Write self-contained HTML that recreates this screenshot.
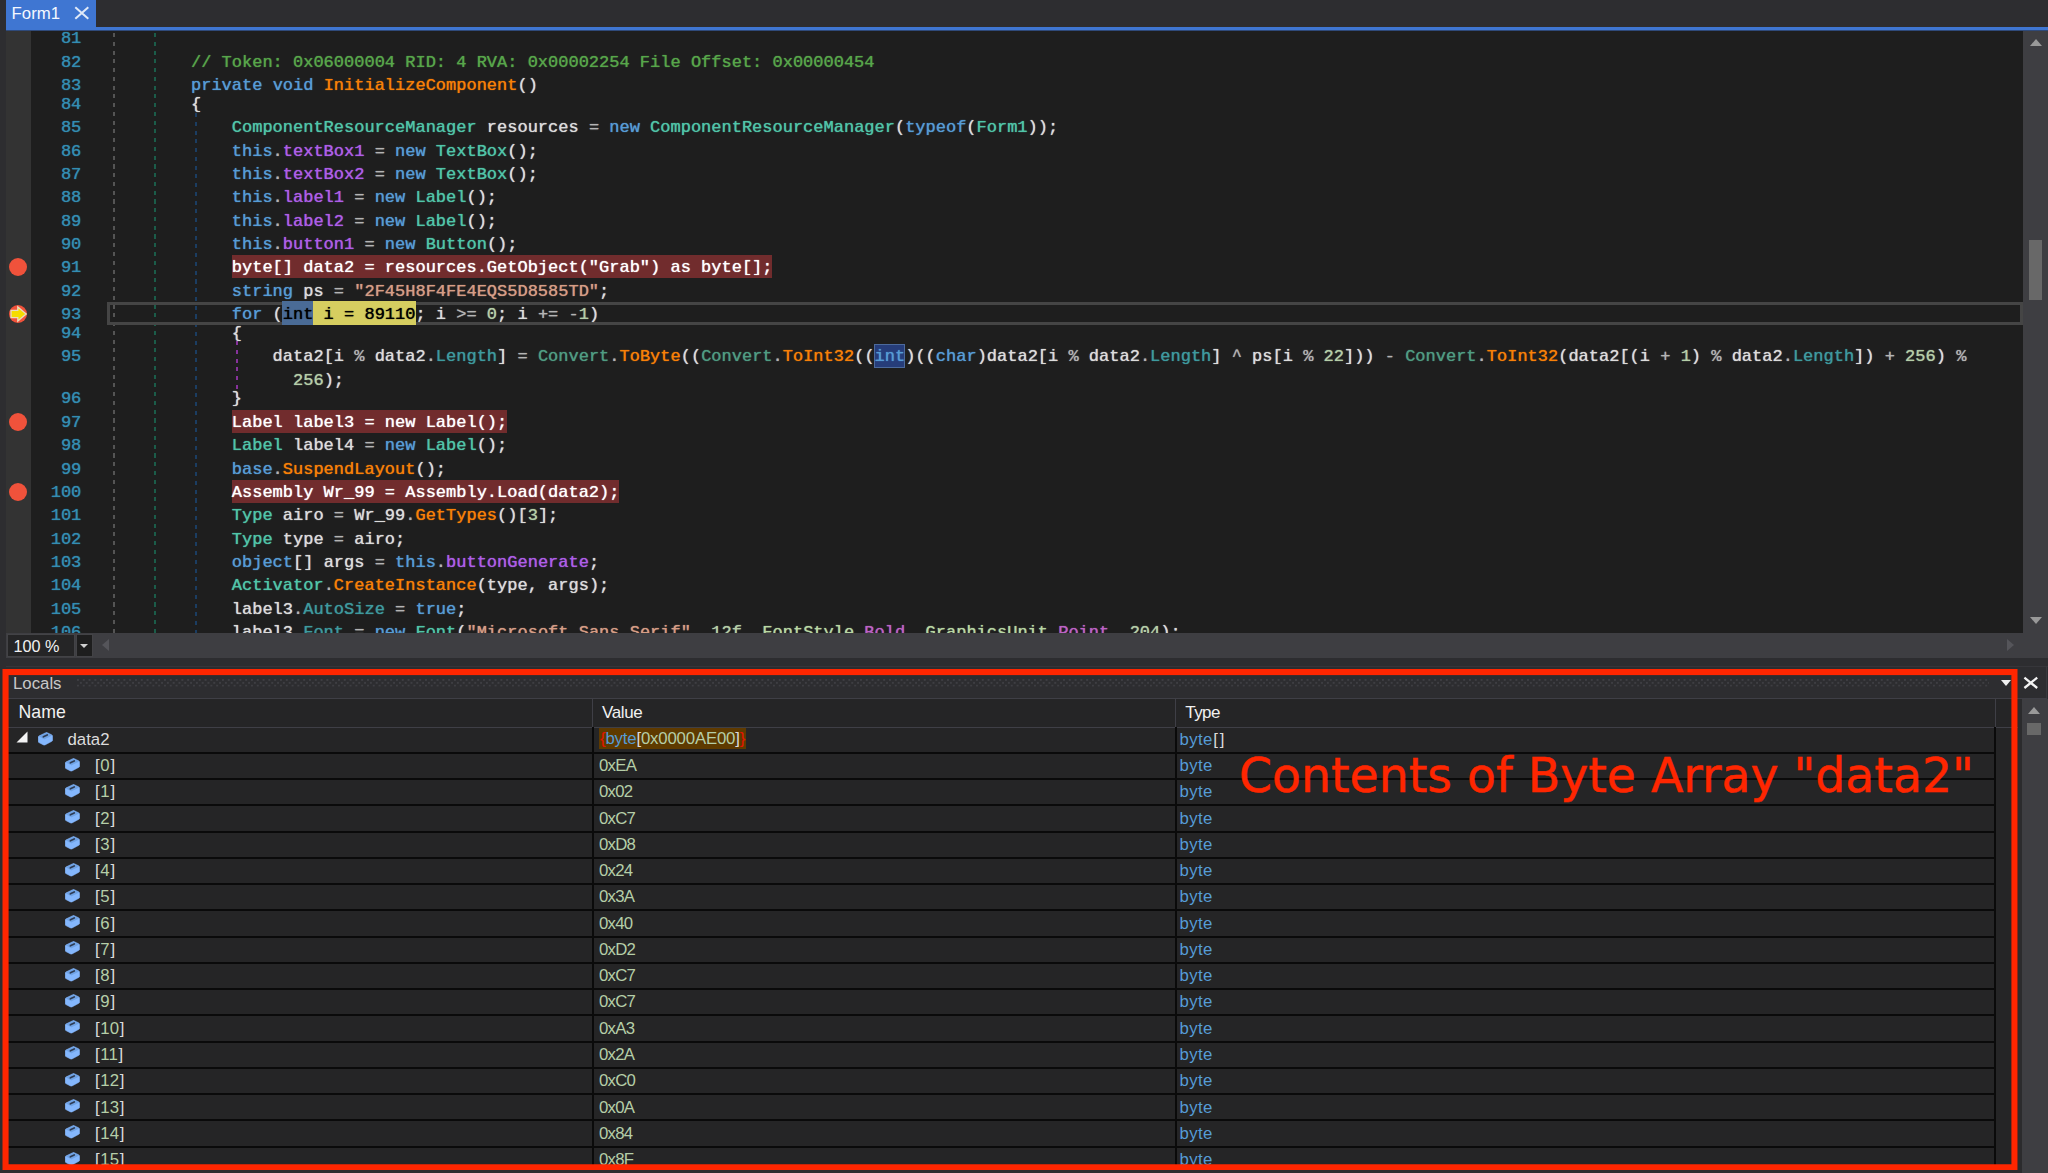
<!DOCTYPE html>
<html lang="en">
<head>
<meta charset="utf-8">
<title>dnSpy - Form1</title>
<style>
html,body{margin:0;padding:0;background:#2d2d30;}
body{width:2048px;height:1173px;overflow:hidden;background:#2d2d30;position:relative;font-family:"Liberation Sans",sans-serif;}
#tabstrip{position:absolute;left:0;top:0;width:2048px;height:27px;background:#2d2d30;}
#tab{position:absolute;left:6px;top:0;width:90px;height:28px;background:#3f76d2;color:#f4f8ff;font-size:16.5px;line-height:27px;}
#tab span{position:absolute;left:5.6px;top:-0.5px;font-size:16.8px;}
#tabline{position:absolute;left:6px;top:27px;width:2042px;height:3.4px;background:#3f76d2;}
#editor{position:absolute;left:6px;top:30px;width:2017px;height:603px;background:#1e1e1e;overflow:hidden;}
#glyph{position:absolute;left:0;top:0;width:24.5px;height:603px;background:#333333;}
.ln,.cl{text-shadow:0 0 1px currentColor;position:absolute;font-family:"Liberation Mono",monospace;font-size:17px;line-height:23px;height:23px;white-space:pre;}
.ln{left:30px;width:45.3px;text-align:right;color:#338db2;}
.cl{color:#dcdcdc;}
.c{color:#57a64a}.k{color:#569cd6}.t{color:#50c5a8}.m{color:#f88008}.f{color:#ae5ee8}.l{color:#dcdcdc}
.n{color:#b5cea8}.s{color:#d69d85}.p{color:#3e9a9e}.o{color:#b4b4b4}.x{color:#dcdcdc}.st{color:#4f9c82}
.e{color:#b8d7a3}.ef{color:#bd63c5}
.bp{color:#ffffff;}
.hl{position:absolute;box-sizing:border-box;}
.cur{color:#000;}
.guide{position:absolute;width:2px;--c:#545454;background-image:repeating-linear-gradient(to bottom,var(--c) 0,var(--c) 4.1px,transparent 4.1px,transparent 8.76px);}
#curline{position:absolute;left:100.5px;top:271.6px;width:1916.4px;height:23.4px;border:3px solid #454545;box-sizing:border-box;}
.bp-dot{position:absolute;left:2.6px;width:18px;height:18px;border-radius:50%;background:#f0523b;}
.curglyph{position:absolute;left:1.6px;}
#vscroll{position:absolute;left:2023px;top:30px;width:25px;height:603px;background:#3e3e42;}
#hscroll{position:absolute;left:6px;top:633px;width:2042px;height:25px;background:#3e3e42;}
#zoombox{position:absolute;left:0.5px;top:0.8px;width:66px;height:21.2px;background:#252526;border:1px solid #434346;color:#f1f1f1;font-size:16.2px;line-height:22px;}
#zoombox span{position:absolute;left:6px;top:0;}
#zoomdd{position:absolute;left:69.5px;top:0.8px;width:15px;height:21.2px;background:#1e1e1e;border:1px solid #434346;}
.tri{position:absolute;width:0;height:0;}
#panelhead{position:absolute;left:0;top:668px;width:2047px;height:30.5px;background:#2d2d30;}
#panelbody{position:absolute;left:6px;top:699px;width:2016px;height:474px;background:#252526;}
#colhead{position:absolute;left:6px;top:699px;width:2016px;height:27.5px;background:#252526;border-bottom:1.4px solid #3f3f46;}
.hd{position:absolute;top:699px;height:27px;line-height:27px;font-size:17px;color:#f1f1f1;}
.hsep{position:absolute;top:699px;width:1px;height:28px;background:#3f3f46;}
.vsep{position:absolute;top:727px;width:2px;height:446px;background:#0a0a0a;}
.sep{position:absolute;left:6px;width:1990px;height:2px;background:#0a0a0a;}
.row{position:absolute;left:6px;width:1990px;}
.nm,.vl,.tp{position:absolute;font-size:16.8px;line-height:25px;height:25px;white-space:pre;color:#dcdcdc;}
.vl{letter-spacing:-0.75px;}
.tp{letter-spacing:0.35px;}
.ix{letter-spacing:0.7px;}
.vhl{background:#5e3a00;display:inline-block;height:21px;line-height:21px;margin-top:1.2px;padding:0 1px 0 1px;vertical-align:top;}
.er{color:#e51400;}
.cube,.exp{position:absolute;}
#redbox{position:absolute;left:2.5px;top:669px;width:2002.8px;height:489.2px;border:6px solid #ff2600;}
#annot{-webkit-text-stroke:0.5px #ff2600;position:absolute;left:1239px;top:746.8px;font-family:"DejaVu Sans","Liberation Sans",sans-serif;font-size:47.35px;line-height:58px;color:#ff2600;white-space:pre;}
#pscroll{position:absolute;left:2022px;top:699px;width:26px;height:474px;background:#3e3e42;}
</style>
</head>
<body>
<div id="tabstrip"></div>
<div id="tab"><span>Form1</span>
<svg style="position:absolute;left:67.5px;top:6px" width="16" height="14" viewBox="0 0 16 14"><path d="M1.3 1.2 L14.3 12.8 M14.3 1.2 L1.3 12.8" stroke="#dfe9f8" stroke-width="2" fill="none"/></svg>
</div>
<div id="tabline"></div>

<div id="editor">
<div id="glyph"></div>
<div class="guide" style="left:107.3px;top:2.5px;height:601px;"></div>
<div class="guide" style="left:148.2px;top:2.5px;height:601px;--c:#1b5c49;"></div>
<div class="guide" style="left:189px;top:82.5px;height:521px;--c:#1b3d62;"></div>
<div class="guide" style="left:229.7px;top:311px;height:58px;--c:#86329b;"></div>
<div id="curline"></div>
<div class="bp-dot" style="top:228.40px"></div>
<div class="bp-dot" style="top:382.90px"></div>
<div class="bp-dot" style="top:452.90px"></div>
<svg class="curglyph" style="top:274.20px" width="20" height="20" viewBox="0 0 20 20"><circle cx="10" cy="10" r="9" fill="#f0523b"/><path d="M3 6.3 H9.8 V3 L18.2 10 L9.8 17 V13.7 H3 Z" fill="#f5dc00" stroke="#e8dcc0" stroke-width="1.3" stroke-linejoin="miter"/></svg>
<div class="ln" style="top:-2.75px">81</div>
<div class="ln" style="top:20.60px">82</div>
<div class="cl" style="top:20.60px;left:185.00px"><span class="c">// Token: 0x06000004 RID: 4 RVA: 0x00002254 File Offset: 0x00000454</span></div>
<div class="ln" style="top:43.95px">83</div>
<div class="cl" style="top:43.95px;left:185.00px"><span class="k">private</span><span class="x"> </span><span class="k">void</span><span class="x"> </span><span class="m">InitializeComponent</span><span class="x">()</span></div>
<div class="ln" style="top:62.75px">84</div>
<div class="cl" style="top:62.75px;left:185.00px"><span class="x">{</span></div>
<div class="ln" style="top:86.25px">85</div>
<div class="cl" style="top:86.25px;left:225.81px"><span class="t">ComponentResourceManager</span><span class="x"> </span><span class="l">resources</span><span class="x"> </span><span class="o">=</span><span class="x"> </span><span class="k">new</span><span class="x"> </span><span class="t">ComponentResourceManager</span><span class="x">(</span><span class="k">typeof</span><span class="x">(</span><span class="t">Form1</span><span class="x">));</span></div>
<div class="ln" style="top:109.60px">86</div>
<div class="cl" style="top:109.60px;left:225.81px"><span class="k">this</span><span class="o">.</span><span class="f">textBox1</span><span class="x"> </span><span class="o">=</span><span class="x"> </span><span class="k">new</span><span class="x"> </span><span class="t">TextBox</span><span class="x">();</span></div>
<div class="ln" style="top:132.95px">87</div>
<div class="cl" style="top:132.95px;left:225.81px"><span class="k">this</span><span class="o">.</span><span class="f">textBox2</span><span class="x"> </span><span class="o">=</span><span class="x"> </span><span class="k">new</span><span class="x"> </span><span class="t">TextBox</span><span class="x">();</span></div>
<div class="ln" style="top:156.25px">88</div>
<div class="cl" style="top:156.25px;left:225.81px"><span class="k">this</span><span class="o">.</span><span class="f">label1</span><span class="x"> </span><span class="o">=</span><span class="x"> </span><span class="k">new</span><span class="x"> </span><span class="t">Label</span><span class="x">();</span></div>
<div class="ln" style="top:179.65px">89</div>
<div class="cl" style="top:179.65px;left:225.81px"><span class="k">this</span><span class="o">.</span><span class="f">label2</span><span class="x"> </span><span class="o">=</span><span class="x"> </span><span class="k">new</span><span class="x"> </span><span class="t">Label</span><span class="x">();</span></div>
<div class="ln" style="top:202.95px">90</div>
<div class="cl" style="top:202.95px;left:225.81px"><span class="k">this</span><span class="o">.</span><span class="f">button1</span><span class="x"> </span><span class="o">=</span><span class="x"> </span><span class="k">new</span><span class="x"> </span><span class="t">Button</span><span class="x">();</span></div>
<div class="ln" style="top:226.35px">91</div>
<div class="hl" style="background:#712c2d;left:225.81px;top:225.10px;width:540.69px;height:23.2px"></div>
<div class="cl" style="top:226.35px;left:225.81px"><span class="bp">byte[] data2 = resources.GetObject("Grab") as byte[];</span></div>
<div class="ln" style="top:249.65px">92</div>
<div class="cl" style="top:249.65px;left:225.81px"><span class="k">string</span><span class="x"> </span><span class="l">ps</span><span class="x"> </span><span class="o">=</span><span class="x"> </span><span class="s">"2F45H8F4FE4EQS5D8585TD"</span><span class="x">;</span></div>
<div class="ln" style="top:273.05px">93</div>
<div class="hl" style="background:#d6ce60;left:276.02px;top:271.05px;width:134.02px;height:24.1px"></div>
<div class="hl" style="background:#4a6b96;left:276.02px;top:271.05px;width:31.41px;height:24.1px"></div>
<div class="cl" style="top:273.05px;left:225.81px"><span class="k">for</span><span class="x"> (</span><span class="cur">int i = 89110</span><span class="x">; </span><span class="l">i</span><span class="x"> </span><span class="o">&gt;=</span><span class="x"> </span><span class="n">0</span><span class="x">; </span><span class="l">i</span><span class="x"> </span><span class="o">+=</span><span class="x"> </span><span class="o">-</span><span class="n">1</span><span class="x">)</span></div>
<div class="ln" style="top:291.75px">94</div>
<div class="cl" style="top:291.75px;left:225.81px"><span class="x">{</span></div>
<div class="ln" style="top:315.45px">95</div>
<div class="hl" style="background:#263d7a;border:1px solid #4c6a9c;left:867.91px;top:313.70px;width:31.41px;height:24px"></div>
<div class="cl" style="top:315.45px;left:266.61px"><span class="l">data2</span><span class="x">[</span><span class="l">i</span><span class="x"> </span><span class="o">%</span><span class="x"> </span><span class="l">data2</span><span class="o">.</span><span class="p">Length</span><span class="x">] </span><span class="o">=</span><span class="x"> </span><span class="st">Convert</span><span class="o">.</span><span class="m">ToByte</span><span class="x">((</span><span class="st">Convert</span><span class="o">.</span><span class="m">ToInt32</span><span class="x">((</span><span class="k">int</span><span class="x">)((</span><span class="k">char</span><span class="x">)</span><span class="l">data2</span><span class="x">[</span><span class="l">i</span><span class="x"> </span><span class="o">%</span><span class="x"> </span><span class="l">data2</span><span class="o">.</span><span class="p">Length</span><span class="x">] </span><span class="o">^</span><span class="x"> </span><span class="l">ps</span><span class="x">[</span><span class="l">i</span><span class="x"> </span><span class="o">%</span><span class="x"> </span><span class="n">22</span><span class="x">])) </span><span class="o">-</span><span class="x"> </span><span class="st">Convert</span><span class="o">.</span><span class="m">ToInt32</span><span class="x">(</span><span class="l">data2</span><span class="x">[(</span><span class="l">i</span><span class="x"> </span><span class="o">+</span><span class="x"> </span><span class="n">1</span><span class="x">) </span><span class="o">%</span><span class="x"> </span><span class="l">data2</span><span class="o">.</span><span class="p">Length</span><span class="x">]) </span><span class="o">+</span><span class="x"> </span><span class="n">256</span><span class="x">) </span><span class="o">%</span></div>
<div class="cl" style="top:338.75px;left:287.02px"><span class="n">256</span><span class="x">);</span></div>
<div class="ln" style="top:357.45px">96</div>
<div class="cl" style="top:357.45px;left:225.81px"><span class="x">}</span></div>
<div class="ln" style="top:380.85px">97</div>
<div class="hl" style="background:#712c2d;left:225.81px;top:379.60px;width:275.45px;height:23.2px"></div>
<div class="cl" style="top:380.85px;left:225.81px"><span class="bp">Label label3 = new Label();</span></div>
<div class="ln" style="top:404.15px">98</div>
<div class="cl" style="top:404.15px;left:225.81px"><span class="t">Label</span><span class="x"> </span><span class="l">label4</span><span class="x"> </span><span class="o">=</span><span class="x"> </span><span class="k">new</span><span class="x"> </span><span class="t">Label</span><span class="x">();</span></div>
<div class="ln" style="top:427.55px">99</div>
<div class="cl" style="top:427.55px;left:225.81px"><span class="k">base</span><span class="o">.</span><span class="m">SuspendLayout</span><span class="x">();</span></div>
<div class="ln" style="top:450.85px">100</div>
<div class="hl" style="background:#712c2d;left:225.81px;top:449.60px;width:387.66px;height:23.2px"></div>
<div class="cl" style="top:450.85px;left:225.81px"><span class="bp">Assembly Wr_99 = Assembly.Load(data2);</span></div>
<div class="ln" style="top:474.25px">101</div>
<div class="cl" style="top:474.25px;left:225.81px"><span class="t">Type</span><span class="x"> </span><span class="l">airo</span><span class="x"> </span><span class="o">=</span><span class="x"> </span><span class="l">Wr_99</span><span class="o">.</span><span class="m">GetTypes</span><span class="x">()[</span><span class="n">3</span><span class="x">];</span></div>
<div class="ln" style="top:497.55px">102</div>
<div class="cl" style="top:497.55px;left:225.81px"><span class="t">Type</span><span class="x"> </span><span class="l">type</span><span class="x"> </span><span class="o">=</span><span class="x"> </span><span class="l">airo</span><span class="x">;</span></div>
<div class="ln" style="top:520.85px">103</div>
<div class="cl" style="top:520.85px;left:225.81px"><span class="k">object</span><span class="x">[] </span><span class="l">args</span><span class="x"> </span><span class="o">=</span><span class="x"> </span><span class="k">this</span><span class="o">.</span><span class="f">buttonGenerate</span><span class="x">;</span></div>
<div class="ln" style="top:544.25px">104</div>
<div class="cl" style="top:544.25px;left:225.81px"><span class="t">Activator</span><span class="o">.</span><span class="m">CreateInstance</span><span class="x">(</span><span class="l">type</span><span class="x">, </span><span class="l">args</span><span class="x">);</span></div>
<div class="ln" style="top:567.55px">105</div>
<div class="cl" style="top:567.55px;left:225.81px"><span class="l">label3</span><span class="o">.</span><span class="p">AutoSize</span><span class="x"> </span><span class="o">=</span><span class="x"> </span><span class="k">true</span><span class="x">;</span></div>
<div class="ln" style="top:590.95px">106</div>
<div class="cl" style="top:590.95px;left:225.81px"><span class="l">label3</span><span class="o">.</span><span class="p">Font</span><span class="x"> </span><span class="o">=</span><span class="x"> </span><span class="k">new</span><span class="x"> </span><span class="t">Font</span><span class="x">(</span><span class="s">"Microsoft Sans Serif"</span><span class="x">, </span><span class="n">12f</span><span class="x">, </span><span class="e">FontStyle</span><span class="o">.</span><span class="ef">Bold</span><span class="x">, </span><span class="e">GraphicsUnit</span><span class="o">.</span><span class="ef">Point</span><span class="x">, </span><span class="n">204</span><span class="x">);</span></div>
</div>

<div style="position:absolute;left:6px;top:30px;width:2042px;height:1px;background:#2f4a7a;z-index:5;"></div>
<div id="vscroll">
<div class="tri" style="left:6.5px;top:9px;border-left:6.5px solid transparent;border-right:6.5px solid transparent;border-bottom:7px solid #999999;"></div>
<div style="position:absolute;left:6px;top:210px;width:13px;height:60px;background:#686868;"></div>
<div class="tri" style="left:6.5px;top:587px;border-left:6.5px solid transparent;border-right:6.5px solid transparent;border-top:7px solid #999999;"></div>
</div>
<div id="hscroll">
<div id="zoombox"><span>100 %</span></div>
<div id="zoomdd"><div class="tri" style="left:3.5px;top:9px;border-left:4px solid transparent;border-right:4px solid transparent;border-top:4.5px solid #d0d0d0;"></div></div>
<div class="tri" style="left:96px;top:5.5px;border-top:6px solid transparent;border-bottom:6px solid transparent;border-right:7px solid #55555a;"></div>
<div class="tri" style="left:2001px;top:5.5px;border-top:6px solid transparent;border-bottom:6px solid transparent;border-left:7px solid #55555a;"></div>
</div>
<div style="position:absolute;left:6px;top:666px;width:2042px;height:1.2px;background:#36363a;"></div>

<div id="panelhead"></div>
<div style="position:absolute;left:13px;top:672px;font-size:16.8px;line-height:24px;color:#c8c8c8;">Locals</div>
<svg style="position:absolute;left:76.8px;top:679.2px" width="1912" height="8" viewBox="0 0 1912 8"><defs><pattern id="gp" width="5.8" height="5.8" patternUnits="userSpaceOnUse"><rect x="0.2" y="0.2" width="1.5" height="1.5" fill="#48484d"/><rect x="3.1" y="3.1" width="1.5" height="1.5" fill="#48484d"/></pattern></defs><rect x="0" y="0" width="1912" height="7.6" fill="url(#gp)"/></svg>
<div class="tri" style="left:2001px;top:679.5px;border-left:5.5px solid transparent;border-right:5.5px solid transparent;border-top:6px solid #f1f1f1;"></div>
<svg style="position:absolute;left:2022.5px;top:675.5px" width="16" height="14" viewBox="0 0 16 14"><path d="M1.4 1.7 L14.2 12.0 M14.2 1.7 L1.4 12.0" stroke="#f4f4f4" stroke-width="2.3" fill="none"/></svg>
<div style="position:absolute;left:6px;top:698px;width:2041px;height:1.4px;background:#3f3f46;"></div>

<div style="position:absolute;left:2046px;top:666px;width:1.2px;height:32px;background:#38383d;"></div>
<div id="panelbody"></div>
<div id="colhead"></div>
<div class="hd" style="left:18.6px;font-size:17.7px;">Name</div>
<div class="hd" style="left:602px;letter-spacing:-0.35px;">Value</div>
<div class="hd" style="left:1185.3px;letter-spacing:-0.6px;">Type</div>
<div class="hsep" style="left:592px;"></div>
<div class="hsep" style="left:1175px;"></div>
<div class="hsep" style="left:1994.6px;"></div>
<div class="row" style="top:727px;height:25.70px"></div>
<svg class="exp" style="left:16px;top:731px" width="12" height="12" viewBox="0 0 12 12"><path d="M11.5 0.5 V11.5 H0.5 Z" fill="#f4f4f4"/></svg>
<svg class="cube" style="left:37.60px;top:731.90px" width="15.2" height="14.25" viewBox="0 0 16 15"><path d="M0.9 4.3 L8.3 0.7 Q9 0.4 9.7 0.7 L14.6 3.1 Q15.3 3.5 15.3 4.3 L15.3 8.6 Q15.3 9.4 14.6 9.8 L7.4 13.6 Q6.6 14 5.8 13.6 L0.9 11.1 Q0.2 10.7 0.2 9.9 L0.2 5.4 Q0.2 4.7 0.9 4.3 Z" fill="#84b7fd" stroke="#84b7fd" stroke-width="0.6" stroke-linejoin="round"/><path d="M1.6 4.6 L8.9 1.1 L14.2 3.6 L6.6 7.3 Z" fill="#6fa2e4" stroke="#6fa2e4" stroke-width="0.8" stroke-linejoin="round"/><path d="M5.7 5.0 L9.7 3.1" stroke="#2e3c54" stroke-width="1.9" stroke-linecap="round" fill="none"/></svg>
<div class="nm" style="left:67.5px;top:726.6px">data2</div>
<div class="vl" style="left:599px;top:726.6px"><span class="vhl" style="letter-spacing:-0.18px"><span class="er">{</span><span class="k">byte</span><span class="x">[</span><span class="n">0x0000AE00</span><span class="x">]</span><span class="er">}</span></span></div>
<div class="tp" style="left:1179.5px;top:726.6px"><span class="k">byte</span><span class="x" style="letter-spacing:2px;margin-left:0.5px">[]</span></div>
<div class="sep" style="top:752px"></div>
<svg class="cube" style="left:65.20px;top:757.50px" width="15.2" height="14.25" viewBox="0 0 16 15"><path d="M0.9 4.3 L8.3 0.7 Q9 0.4 9.7 0.7 L14.6 3.1 Q15.3 3.5 15.3 4.3 L15.3 8.6 Q15.3 9.4 14.6 9.8 L7.4 13.6 Q6.6 14 5.8 13.6 L0.9 11.1 Q0.2 10.7 0.2 9.9 L0.2 5.4 Q0.2 4.7 0.9 4.3 Z" fill="#84b7fd" stroke="#84b7fd" stroke-width="0.6" stroke-linejoin="round"/><path d="M1.6 4.6 L8.9 1.1 L14.2 3.6 L6.6 7.3 Z" fill="#6fa2e4" stroke="#6fa2e4" stroke-width="0.8" stroke-linejoin="round"/><path d="M5.7 5.0 L9.7 3.1" stroke="#2e3c54" stroke-width="1.9" stroke-linecap="round" fill="none"/></svg>
<div class="nm" style="left:95px;top:753.00px"><span class="x">[</span><span class="n" style="margin:0 0.7px">0</span><span class="x">]</span></div>
<div class="vl" style="left:599px;top:753.00px"><span class="n">0xEA</span></div>
<div class="tp" style="left:1179.5px;top:753.00px"><span class="k">byte</span></div>
<div class="sep" style="top:778px"></div>
<svg class="cube" style="left:65.20px;top:783.77px" width="15.2" height="14.25" viewBox="0 0 16 15"><path d="M0.9 4.3 L8.3 0.7 Q9 0.4 9.7 0.7 L14.6 3.1 Q15.3 3.5 15.3 4.3 L15.3 8.6 Q15.3 9.4 14.6 9.8 L7.4 13.6 Q6.6 14 5.8 13.6 L0.9 11.1 Q0.2 10.7 0.2 9.9 L0.2 5.4 Q0.2 4.7 0.9 4.3 Z" fill="#84b7fd" stroke="#84b7fd" stroke-width="0.6" stroke-linejoin="round"/><path d="M1.6 4.6 L8.9 1.1 L14.2 3.6 L6.6 7.3 Z" fill="#6fa2e4" stroke="#6fa2e4" stroke-width="0.8" stroke-linejoin="round"/><path d="M5.7 5.0 L9.7 3.1" stroke="#2e3c54" stroke-width="1.9" stroke-linecap="round" fill="none"/></svg>
<div class="nm" style="left:95px;top:779.27px"><span class="x">[</span><span class="n" style="margin:0 0.7px">1</span><span class="x">]</span></div>
<div class="vl" style="left:599px;top:779.27px"><span class="n">0x02</span></div>
<div class="tp" style="left:1179.5px;top:779.27px"><span class="k">byte</span></div>
<div class="sep" style="top:804px"></div>
<svg class="cube" style="left:65.20px;top:810.04px" width="15.2" height="14.25" viewBox="0 0 16 15"><path d="M0.9 4.3 L8.3 0.7 Q9 0.4 9.7 0.7 L14.6 3.1 Q15.3 3.5 15.3 4.3 L15.3 8.6 Q15.3 9.4 14.6 9.8 L7.4 13.6 Q6.6 14 5.8 13.6 L0.9 11.1 Q0.2 10.7 0.2 9.9 L0.2 5.4 Q0.2 4.7 0.9 4.3 Z" fill="#84b7fd" stroke="#84b7fd" stroke-width="0.6" stroke-linejoin="round"/><path d="M1.6 4.6 L8.9 1.1 L14.2 3.6 L6.6 7.3 Z" fill="#6fa2e4" stroke="#6fa2e4" stroke-width="0.8" stroke-linejoin="round"/><path d="M5.7 5.0 L9.7 3.1" stroke="#2e3c54" stroke-width="1.9" stroke-linecap="round" fill="none"/></svg>
<div class="nm" style="left:95px;top:805.54px"><span class="x">[</span><span class="n" style="margin:0 0.7px">2</span><span class="x">]</span></div>
<div class="vl" style="left:599px;top:805.54px"><span class="n">0xC7</span></div>
<div class="tp" style="left:1179.5px;top:805.54px"><span class="k">byte</span></div>
<div class="sep" style="top:831px"></div>
<svg class="cube" style="left:65.20px;top:836.31px" width="15.2" height="14.25" viewBox="0 0 16 15"><path d="M0.9 4.3 L8.3 0.7 Q9 0.4 9.7 0.7 L14.6 3.1 Q15.3 3.5 15.3 4.3 L15.3 8.6 Q15.3 9.4 14.6 9.8 L7.4 13.6 Q6.6 14 5.8 13.6 L0.9 11.1 Q0.2 10.7 0.2 9.9 L0.2 5.4 Q0.2 4.7 0.9 4.3 Z" fill="#84b7fd" stroke="#84b7fd" stroke-width="0.6" stroke-linejoin="round"/><path d="M1.6 4.6 L8.9 1.1 L14.2 3.6 L6.6 7.3 Z" fill="#6fa2e4" stroke="#6fa2e4" stroke-width="0.8" stroke-linejoin="round"/><path d="M5.7 5.0 L9.7 3.1" stroke="#2e3c54" stroke-width="1.9" stroke-linecap="round" fill="none"/></svg>
<div class="nm" style="left:95px;top:831.81px"><span class="x">[</span><span class="n" style="margin:0 0.7px">3</span><span class="x">]</span></div>
<div class="vl" style="left:599px;top:831.81px"><span class="n">0xD8</span></div>
<div class="tp" style="left:1179.5px;top:831.81px"><span class="k">byte</span></div>
<div class="sep" style="top:857px"></div>
<svg class="cube" style="left:65.20px;top:862.58px" width="15.2" height="14.25" viewBox="0 0 16 15"><path d="M0.9 4.3 L8.3 0.7 Q9 0.4 9.7 0.7 L14.6 3.1 Q15.3 3.5 15.3 4.3 L15.3 8.6 Q15.3 9.4 14.6 9.8 L7.4 13.6 Q6.6 14 5.8 13.6 L0.9 11.1 Q0.2 10.7 0.2 9.9 L0.2 5.4 Q0.2 4.7 0.9 4.3 Z" fill="#84b7fd" stroke="#84b7fd" stroke-width="0.6" stroke-linejoin="round"/><path d="M1.6 4.6 L8.9 1.1 L14.2 3.6 L6.6 7.3 Z" fill="#6fa2e4" stroke="#6fa2e4" stroke-width="0.8" stroke-linejoin="round"/><path d="M5.7 5.0 L9.7 3.1" stroke="#2e3c54" stroke-width="1.9" stroke-linecap="round" fill="none"/></svg>
<div class="nm" style="left:95px;top:858.08px"><span class="x">[</span><span class="n" style="margin:0 0.7px">4</span><span class="x">]</span></div>
<div class="vl" style="left:599px;top:858.08px"><span class="n">0x24</span></div>
<div class="tp" style="left:1179.5px;top:858.08px"><span class="k">byte</span></div>
<div class="sep" style="top:883px"></div>
<svg class="cube" style="left:65.20px;top:888.85px" width="15.2" height="14.25" viewBox="0 0 16 15"><path d="M0.9 4.3 L8.3 0.7 Q9 0.4 9.7 0.7 L14.6 3.1 Q15.3 3.5 15.3 4.3 L15.3 8.6 Q15.3 9.4 14.6 9.8 L7.4 13.6 Q6.6 14 5.8 13.6 L0.9 11.1 Q0.2 10.7 0.2 9.9 L0.2 5.4 Q0.2 4.7 0.9 4.3 Z" fill="#84b7fd" stroke="#84b7fd" stroke-width="0.6" stroke-linejoin="round"/><path d="M1.6 4.6 L8.9 1.1 L14.2 3.6 L6.6 7.3 Z" fill="#6fa2e4" stroke="#6fa2e4" stroke-width="0.8" stroke-linejoin="round"/><path d="M5.7 5.0 L9.7 3.1" stroke="#2e3c54" stroke-width="1.9" stroke-linecap="round" fill="none"/></svg>
<div class="nm" style="left:95px;top:884.35px"><span class="x">[</span><span class="n" style="margin:0 0.7px">5</span><span class="x">]</span></div>
<div class="vl" style="left:599px;top:884.35px"><span class="n">0x3A</span></div>
<div class="tp" style="left:1179.5px;top:884.35px"><span class="k">byte</span></div>
<div class="sep" style="top:909px"></div>
<svg class="cube" style="left:65.20px;top:915.12px" width="15.2" height="14.25" viewBox="0 0 16 15"><path d="M0.9 4.3 L8.3 0.7 Q9 0.4 9.7 0.7 L14.6 3.1 Q15.3 3.5 15.3 4.3 L15.3 8.6 Q15.3 9.4 14.6 9.8 L7.4 13.6 Q6.6 14 5.8 13.6 L0.9 11.1 Q0.2 10.7 0.2 9.9 L0.2 5.4 Q0.2 4.7 0.9 4.3 Z" fill="#84b7fd" stroke="#84b7fd" stroke-width="0.6" stroke-linejoin="round"/><path d="M1.6 4.6 L8.9 1.1 L14.2 3.6 L6.6 7.3 Z" fill="#6fa2e4" stroke="#6fa2e4" stroke-width="0.8" stroke-linejoin="round"/><path d="M5.7 5.0 L9.7 3.1" stroke="#2e3c54" stroke-width="1.9" stroke-linecap="round" fill="none"/></svg>
<div class="nm" style="left:95px;top:910.62px"><span class="x">[</span><span class="n" style="margin:0 0.7px">6</span><span class="x">]</span></div>
<div class="vl" style="left:599px;top:910.62px"><span class="n">0x40</span></div>
<div class="tp" style="left:1179.5px;top:910.62px"><span class="k">byte</span></div>
<div class="sep" style="top:936px"></div>
<svg class="cube" style="left:65.20px;top:941.39px" width="15.2" height="14.25" viewBox="0 0 16 15"><path d="M0.9 4.3 L8.3 0.7 Q9 0.4 9.7 0.7 L14.6 3.1 Q15.3 3.5 15.3 4.3 L15.3 8.6 Q15.3 9.4 14.6 9.8 L7.4 13.6 Q6.6 14 5.8 13.6 L0.9 11.1 Q0.2 10.7 0.2 9.9 L0.2 5.4 Q0.2 4.7 0.9 4.3 Z" fill="#84b7fd" stroke="#84b7fd" stroke-width="0.6" stroke-linejoin="round"/><path d="M1.6 4.6 L8.9 1.1 L14.2 3.6 L6.6 7.3 Z" fill="#6fa2e4" stroke="#6fa2e4" stroke-width="0.8" stroke-linejoin="round"/><path d="M5.7 5.0 L9.7 3.1" stroke="#2e3c54" stroke-width="1.9" stroke-linecap="round" fill="none"/></svg>
<div class="nm" style="left:95px;top:936.89px"><span class="x">[</span><span class="n" style="margin:0 0.7px">7</span><span class="x">]</span></div>
<div class="vl" style="left:599px;top:936.89px"><span class="n">0xD2</span></div>
<div class="tp" style="left:1179.5px;top:936.89px"><span class="k">byte</span></div>
<div class="sep" style="top:962px"></div>
<svg class="cube" style="left:65.20px;top:967.66px" width="15.2" height="14.25" viewBox="0 0 16 15"><path d="M0.9 4.3 L8.3 0.7 Q9 0.4 9.7 0.7 L14.6 3.1 Q15.3 3.5 15.3 4.3 L15.3 8.6 Q15.3 9.4 14.6 9.8 L7.4 13.6 Q6.6 14 5.8 13.6 L0.9 11.1 Q0.2 10.7 0.2 9.9 L0.2 5.4 Q0.2 4.7 0.9 4.3 Z" fill="#84b7fd" stroke="#84b7fd" stroke-width="0.6" stroke-linejoin="round"/><path d="M1.6 4.6 L8.9 1.1 L14.2 3.6 L6.6 7.3 Z" fill="#6fa2e4" stroke="#6fa2e4" stroke-width="0.8" stroke-linejoin="round"/><path d="M5.7 5.0 L9.7 3.1" stroke="#2e3c54" stroke-width="1.9" stroke-linecap="round" fill="none"/></svg>
<div class="nm" style="left:95px;top:963.16px"><span class="x">[</span><span class="n" style="margin:0 0.7px">8</span><span class="x">]</span></div>
<div class="vl" style="left:599px;top:963.16px"><span class="n">0xC7</span></div>
<div class="tp" style="left:1179.5px;top:963.16px"><span class="k">byte</span></div>
<div class="sep" style="top:988px"></div>
<svg class="cube" style="left:65.20px;top:993.93px" width="15.2" height="14.25" viewBox="0 0 16 15"><path d="M0.9 4.3 L8.3 0.7 Q9 0.4 9.7 0.7 L14.6 3.1 Q15.3 3.5 15.3 4.3 L15.3 8.6 Q15.3 9.4 14.6 9.8 L7.4 13.6 Q6.6 14 5.8 13.6 L0.9 11.1 Q0.2 10.7 0.2 9.9 L0.2 5.4 Q0.2 4.7 0.9 4.3 Z" fill="#84b7fd" stroke="#84b7fd" stroke-width="0.6" stroke-linejoin="round"/><path d="M1.6 4.6 L8.9 1.1 L14.2 3.6 L6.6 7.3 Z" fill="#6fa2e4" stroke="#6fa2e4" stroke-width="0.8" stroke-linejoin="round"/><path d="M5.7 5.0 L9.7 3.1" stroke="#2e3c54" stroke-width="1.9" stroke-linecap="round" fill="none"/></svg>
<div class="nm" style="left:95px;top:989.43px"><span class="x">[</span><span class="n" style="margin:0 0.7px">9</span><span class="x">]</span></div>
<div class="vl" style="left:599px;top:989.43px"><span class="n">0xC7</span></div>
<div class="tp" style="left:1179.5px;top:989.43px"><span class="k">byte</span></div>
<div class="sep" style="top:1014px"></div>
<svg class="cube" style="left:65.20px;top:1020.20px" width="15.2" height="14.25" viewBox="0 0 16 15"><path d="M0.9 4.3 L8.3 0.7 Q9 0.4 9.7 0.7 L14.6 3.1 Q15.3 3.5 15.3 4.3 L15.3 8.6 Q15.3 9.4 14.6 9.8 L7.4 13.6 Q6.6 14 5.8 13.6 L0.9 11.1 Q0.2 10.7 0.2 9.9 L0.2 5.4 Q0.2 4.7 0.9 4.3 Z" fill="#84b7fd" stroke="#84b7fd" stroke-width="0.6" stroke-linejoin="round"/><path d="M1.6 4.6 L8.9 1.1 L14.2 3.6 L6.6 7.3 Z" fill="#6fa2e4" stroke="#6fa2e4" stroke-width="0.8" stroke-linejoin="round"/><path d="M5.7 5.0 L9.7 3.1" stroke="#2e3c54" stroke-width="1.9" stroke-linecap="round" fill="none"/></svg>
<div class="nm" style="left:95px;top:1015.70px"><span class="x">[</span><span class="n" style="margin:0 0.7px">10</span><span class="x">]</span></div>
<div class="vl" style="left:599px;top:1015.70px"><span class="n">0xA3</span></div>
<div class="tp" style="left:1179.5px;top:1015.70px"><span class="k">byte</span></div>
<div class="sep" style="top:1041px"></div>
<svg class="cube" style="left:65.20px;top:1046.47px" width="15.2" height="14.25" viewBox="0 0 16 15"><path d="M0.9 4.3 L8.3 0.7 Q9 0.4 9.7 0.7 L14.6 3.1 Q15.3 3.5 15.3 4.3 L15.3 8.6 Q15.3 9.4 14.6 9.8 L7.4 13.6 Q6.6 14 5.8 13.6 L0.9 11.1 Q0.2 10.7 0.2 9.9 L0.2 5.4 Q0.2 4.7 0.9 4.3 Z" fill="#84b7fd" stroke="#84b7fd" stroke-width="0.6" stroke-linejoin="round"/><path d="M1.6 4.6 L8.9 1.1 L14.2 3.6 L6.6 7.3 Z" fill="#6fa2e4" stroke="#6fa2e4" stroke-width="0.8" stroke-linejoin="round"/><path d="M5.7 5.0 L9.7 3.1" stroke="#2e3c54" stroke-width="1.9" stroke-linecap="round" fill="none"/></svg>
<div class="nm" style="left:95px;top:1041.97px"><span class="x">[</span><span class="n" style="margin:0 0.7px">11</span><span class="x">]</span></div>
<div class="vl" style="left:599px;top:1041.97px"><span class="n">0x2A</span></div>
<div class="tp" style="left:1179.5px;top:1041.97px"><span class="k">byte</span></div>
<div class="sep" style="top:1067px"></div>
<svg class="cube" style="left:65.20px;top:1072.74px" width="15.2" height="14.25" viewBox="0 0 16 15"><path d="M0.9 4.3 L8.3 0.7 Q9 0.4 9.7 0.7 L14.6 3.1 Q15.3 3.5 15.3 4.3 L15.3 8.6 Q15.3 9.4 14.6 9.8 L7.4 13.6 Q6.6 14 5.8 13.6 L0.9 11.1 Q0.2 10.7 0.2 9.9 L0.2 5.4 Q0.2 4.7 0.9 4.3 Z" fill="#84b7fd" stroke="#84b7fd" stroke-width="0.6" stroke-linejoin="round"/><path d="M1.6 4.6 L8.9 1.1 L14.2 3.6 L6.6 7.3 Z" fill="#6fa2e4" stroke="#6fa2e4" stroke-width="0.8" stroke-linejoin="round"/><path d="M5.7 5.0 L9.7 3.1" stroke="#2e3c54" stroke-width="1.9" stroke-linecap="round" fill="none"/></svg>
<div class="nm" style="left:95px;top:1068.24px"><span class="x">[</span><span class="n" style="margin:0 0.7px">12</span><span class="x">]</span></div>
<div class="vl" style="left:599px;top:1068.24px"><span class="n">0xC0</span></div>
<div class="tp" style="left:1179.5px;top:1068.24px"><span class="k">byte</span></div>
<div class="sep" style="top:1093px"></div>
<svg class="cube" style="left:65.20px;top:1099.01px" width="15.2" height="14.25" viewBox="0 0 16 15"><path d="M0.9 4.3 L8.3 0.7 Q9 0.4 9.7 0.7 L14.6 3.1 Q15.3 3.5 15.3 4.3 L15.3 8.6 Q15.3 9.4 14.6 9.8 L7.4 13.6 Q6.6 14 5.8 13.6 L0.9 11.1 Q0.2 10.7 0.2 9.9 L0.2 5.4 Q0.2 4.7 0.9 4.3 Z" fill="#84b7fd" stroke="#84b7fd" stroke-width="0.6" stroke-linejoin="round"/><path d="M1.6 4.6 L8.9 1.1 L14.2 3.6 L6.6 7.3 Z" fill="#6fa2e4" stroke="#6fa2e4" stroke-width="0.8" stroke-linejoin="round"/><path d="M5.7 5.0 L9.7 3.1" stroke="#2e3c54" stroke-width="1.9" stroke-linecap="round" fill="none"/></svg>
<div class="nm" style="left:95px;top:1094.51px"><span class="x">[</span><span class="n" style="margin:0 0.7px">13</span><span class="x">]</span></div>
<div class="vl" style="left:599px;top:1094.51px"><span class="n">0x0A</span></div>
<div class="tp" style="left:1179.5px;top:1094.51px"><span class="k">byte</span></div>
<div class="sep" style="top:1119px"></div>
<svg class="cube" style="left:65.20px;top:1125.28px" width="15.2" height="14.25" viewBox="0 0 16 15"><path d="M0.9 4.3 L8.3 0.7 Q9 0.4 9.7 0.7 L14.6 3.1 Q15.3 3.5 15.3 4.3 L15.3 8.6 Q15.3 9.4 14.6 9.8 L7.4 13.6 Q6.6 14 5.8 13.6 L0.9 11.1 Q0.2 10.7 0.2 9.9 L0.2 5.4 Q0.2 4.7 0.9 4.3 Z" fill="#84b7fd" stroke="#84b7fd" stroke-width="0.6" stroke-linejoin="round"/><path d="M1.6 4.6 L8.9 1.1 L14.2 3.6 L6.6 7.3 Z" fill="#6fa2e4" stroke="#6fa2e4" stroke-width="0.8" stroke-linejoin="round"/><path d="M5.7 5.0 L9.7 3.1" stroke="#2e3c54" stroke-width="1.9" stroke-linecap="round" fill="none"/></svg>
<div class="nm" style="left:95px;top:1120.78px"><span class="x">[</span><span class="n" style="margin:0 0.7px">14</span><span class="x">]</span></div>
<div class="vl" style="left:599px;top:1120.78px"><span class="n">0x84</span></div>
<div class="tp" style="left:1179.5px;top:1120.78px"><span class="k">byte</span></div>
<div class="sep" style="top:1146px"></div>
<svg class="cube" style="left:65.20px;top:1151.55px" width="15.2" height="14.25" viewBox="0 0 16 15"><path d="M0.9 4.3 L8.3 0.7 Q9 0.4 9.7 0.7 L14.6 3.1 Q15.3 3.5 15.3 4.3 L15.3 8.6 Q15.3 9.4 14.6 9.8 L7.4 13.6 Q6.6 14 5.8 13.6 L0.9 11.1 Q0.2 10.7 0.2 9.9 L0.2 5.4 Q0.2 4.7 0.9 4.3 Z" fill="#84b7fd" stroke="#84b7fd" stroke-width="0.6" stroke-linejoin="round"/><path d="M1.6 4.6 L8.9 1.1 L14.2 3.6 L6.6 7.3 Z" fill="#6fa2e4" stroke="#6fa2e4" stroke-width="0.8" stroke-linejoin="round"/><path d="M5.7 5.0 L9.7 3.1" stroke="#2e3c54" stroke-width="1.9" stroke-linecap="round" fill="none"/></svg>
<div class="nm" style="left:95px;top:1147.05px"><span class="x">[</span><span class="n" style="margin:0 0.7px">15</span><span class="x">]</span></div>
<div class="vl" style="left:599px;top:1147.05px"><span class="n">0x8F</span></div>
<div class="tp" style="left:1179.5px;top:1147.05px"><span class="k">byte</span></div>
<div class="vsep" style="left:591.5px;"></div>
<div class="vsep" style="left:1174.6px;"></div>
<div class="vsep" style="left:1993.8px;"></div>
<div id="pscroll">
<div class="tri" style="left:5.7px;top:8px;border-left:6.4px solid transparent;border-right:6.4px solid transparent;border-bottom:7px solid #999999;"></div>
<div style="position:absolute;left:5.3px;top:24px;width:13.3px;height:11.7px;background:#686868;"></div>
</div>
<div style="position:absolute;left:2017.5px;top:699px;width:4.5px;height:474px;background:#2b2b2d;"></div>
<div id="annot">Contents of Byte Array "data2"</div>
<svg style="position:absolute;left:0;top:660px" width="2030" height="513" viewBox="0 660 2030 513"><rect x="5.55" y="672.05" width="2008.9" height="495.25" fill="none" stroke="#ff2600" stroke-width="6.1"/></svg>
<div style="position:absolute;left:0;top:1170.2px;width:2022px;height:3px;background:#2d2d30;"></div>
</body>
</html>
